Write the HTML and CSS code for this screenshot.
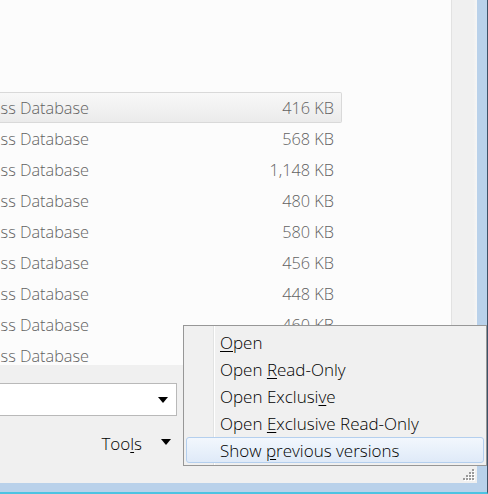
FILE: index.html
```html
<!DOCTYPE html>
<html>
<head>
<meta charset="utf-8">
<link rel="stylesheet" href="styles.css">
</head>
<body>
<div class="frame">
  <div class="client">
    <div class="top">
      <div class="list">
        <div class="row sel"><div class="name"><span>Microsoft Access Database</span></div><div class="size">416 KB</div></div>
        <div class="row"><div class="name"><span>Microsoft Access Database</span></div><div class="size">568 KB</div></div>
        <div class="row"><div class="name"><span>Microsoft Access Database</span></div><div class="size">1,148 KB</div></div>
        <div class="row"><div class="name"><span>Microsoft Access Database</span></div><div class="size">480 KB</div></div>
        <div class="row"><div class="name"><span>Microsoft Access Database</span></div><div class="size">580 KB</div></div>
        <div class="row"><div class="name"><span>Microsoft Access Database</span></div><div class="size">456 KB</div></div>
        <div class="row"><div class="name"><span>Microsoft Access Database</span></div><div class="size">448 KB</div></div>
        <div class="row"><div class="name"><span>Microsoft Access Database</span></div><div class="size">460 KB</div></div>
        <div class="row"><div class="name"><span>Microsoft Access Database</span></div><div class="size">428 KB</div></div>
      </div>
      <div class="side"></div>
    </div>
    <div class="bottom">
      <div class="combo"><span class="arrow"></span></div>
      <div class="tools"><span class="tools-label">Too<u>l</u>s</span><span class="arrow"></span></div>
      <svg class="grip" width="12" height="12" viewBox="0 0 12 12">
        <g fill="#fff"><rect x="10" y="1" width="2" height="2"/><rect x="7" y="4" width="2" height="2"/><rect x="10" y="4" width="2" height="2"/><rect x="4" y="7" width="2" height="2"/><rect x="7" y="7" width="2" height="2"/><rect x="10" y="7" width="2" height="2"/><rect x="1" y="10" width="2" height="2"/><rect x="4" y="10" width="2" height="2"/><rect x="7" y="10" width="2" height="2"/><rect x="10" y="10" width="2" height="2"/></g>
        <g fill="#9a9a9a"><rect x="9" y="0" width="2" height="2"/><rect x="6" y="3" width="2" height="2"/><rect x="9" y="3" width="2" height="2"/><rect x="3" y="6" width="2" height="2"/><rect x="6" y="6" width="2" height="2"/><rect x="9" y="6" width="2" height="2"/><rect x="0" y="9" width="2" height="2"/><rect x="3" y="9" width="2" height="2"/><rect x="6" y="9" width="2" height="2"/><rect x="9" y="9" width="2" height="2"/></g>
      </svg>
    </div>
  </div>
</div>
<div class="menu">
  <div class="item"><span><u>O</u>pen</span></div>
  <div class="item"><span>Open <u>R</u>ead-Only</span></div>
  <div class="item"><span>Open Exclusi<u>v</u>e</span></div>
  <div class="item"><span>Open <u>E</u>xclusive Read-Only</span></div>
  <div class="item hi"><span>Show <u>p</u>revious versions</span></div>
</div>
</body>
</html>
```

FILE: styles.css
```css
html, body {
  margin: 0;
  padding: 0;
  background: #f0f0f0;
}
body {
  width: 488px;
  height: 494px;
  overflow: hidden;
  position: relative;
  font-family: "Open Sans", "Noto Sans", sans-serif;
}
.frame {
  width: 488px;
  height: 494px;
  box-sizing: border-box;
  border-right: 1px solid #3d5166;
  border-bottom: 2px solid #4cc3e2;
}
.client {
  height: 100%;
  box-sizing: border-box;
  border-right: 10px solid #b9d1ea;
  border-bottom: 9px solid #b9d1ea;
  background: #f0f0f0;
  display: flex;
  flex-direction: column;
}
.top {
  height: 365px;
  display: flex;
}
.list {
  width: 452px;
  background: #fcfcfc;
  border-right: 1px solid #e2e2e2;
  overflow: hidden;
  padding-top: 92px;
  box-sizing: border-box;
}
.side {
  flex: 1;
  background: linear-gradient(to right, #f0f0f0 85%, #f6f6f6);
}
.row {
  width: 342px;
  height: 31px;
  box-sizing: border-box;
  display: flex;
  align-items: center;
  color: #626262;
  font-size: 16.3px;
  font-weight: 300;
  border: 1px solid transparent;
  border-left: none;
  border-radius: 0 2px 2px 0;
}
.row.sel {
  background: linear-gradient(#f8f8f8, #ebebeb);
  border-color: #d9d9d9;
}
.name {
  width: 89px;
  display: flex;
  justify-content: flex-end;
  white-space: nowrap;
}
.size {
  flex: 1;
  text-align: right;
  padding-right: 7px;
}
.bottom {
  flex: 1;
  position: relative;
  padding-top: 18px;
}
.combo {
  width: 177px;
  height: 33px;
  box-sizing: border-box;
  background: #fff;
  border: 1px solid #b9b9b9;
  border-left: none;
  display: flex;
  align-items: center;
  justify-content: flex-end;
  padding-right: 8px;
}
.arrow {
  width: 0;
  height: 0;
  border-left: 5.5px solid transparent;
  border-right: 5.5px solid transparent;
  border-top: 6px solid #000;
}
.tools {
  width: 171px;
  display: flex;
  justify-content: flex-end;
  align-items: center;
  margin-top: 16px;
  gap: 19px;
  font-size: 17px;
  font-weight: 350;
  color: #000;
}
.tools .arrow { margin-top: -4px; }
.tools u { text-underline-offset: 2px; }
.grip {
  position: absolute;
  right: 2px;
  bottom: 2px;
}
.menu {
  position: absolute;
  left: 183px;
  top: 325px;
  width: 304px;
  box-sizing: border-box;
  border: 1px solid #979797;
  background: #f0f0f0 linear-gradient(to right, transparent 29px, #e2e3e3 29px, #e2e3e3 30px, #fff 30px, #fff 31px, transparent 31px);
  padding: 3px 0 1px;
  font-size: 17px;
  font-weight: 350;
  color: #000;
}
.item {
  height: 26px;
  margin: 0 2px 1px;
  box-sizing: border-box;
  border: 1px solid transparent;
  border-radius: 3px;
  padding-left: 33px;
  display: flex;
  align-items: center;
  white-space: nowrap;
}
.item u { text-underline-offset: 2px; }
.item.hi {
  background: linear-gradient(#f2f7fd, #dfeaf8);
  border-color: #b4cfee;
}
```
